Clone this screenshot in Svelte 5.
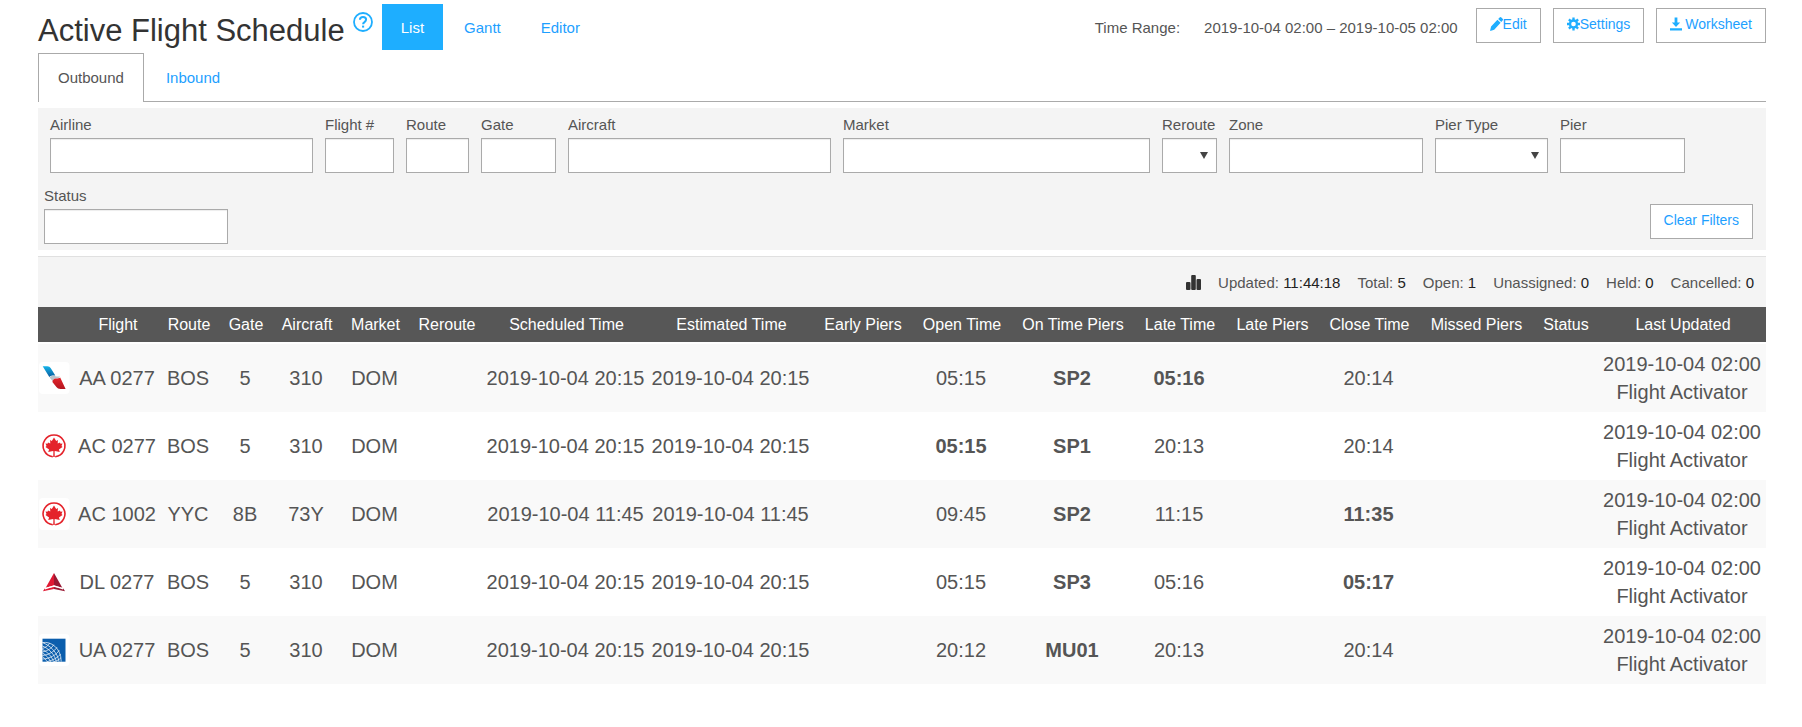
<script>
  const views = ['List', 'Gantt', 'Editor'];
  let view = $state('List');

  const directions = ['Outbound', 'Inbound'];
  let direction = $state('Outbound');

  const filters = [
    { id: 'airline', label: 'Airline' },
    { id: 'flight', label: 'Flight #' },
    { id: 'route', label: 'Route' },
    { id: 'gate', label: 'Gate' },
    { id: 'aircraft', label: 'Aircraft' },
    { id: 'market', label: 'Market' },
    { id: 'reroute', label: 'Reroute', select: true },
    { id: 'zone', label: 'Zone' },
    { id: 'pier-type', label: 'Pier Type', select: true },
    { id: 'pier', label: 'Pier' }
  ];

  const stats = [
    ['Updated:', '11:44:18'],
    ['Total:', '5'],
    ['Open:', '1'],
    ['Unassigned:', '0'],
    ['Held:', '0'],
    ['Cancelled:', '0']
  ];

  const columns = [
    { label: '', width: 38 },
    { label: 'Flight', width: 82 },
    { label: 'Route', width: 60 },
    { label: 'Gate', width: 54 },
    { label: 'Aircraft', width: 68 },
    { label: 'Market', width: 69 },
    { label: 'Reroute', width: 74 },
    { label: 'Scheduled Time', width: 165 },
    { label: 'Estimated Time', width: 165 },
    { label: 'Early Piers', width: 98 },
    { label: 'Open Time', width: 100 },
    { label: 'On Time Piers', width: 122 },
    { label: 'Late Time', width: 92 },
    { label: 'Late Piers', width: 93 },
    { label: 'Close Time', width: 101 },
    { label: 'Missed Piers', width: 113 },
    { label: 'Status', width: 66 },
    { label: 'Last Updated', width: 168 }
  ];
  const totalWidth = columns.reduce((sum, c) => sum + c.width, 0);

  const flights = [
    { airline: 'AA', flight: 'AA 0277', route: 'BOS', gate: '5', aircraft: '310', time: '2019-10-04 20:15', open: '05:15', pier: 'SP2', late: '05:16', close: '20:14', bold: 'late' },
    { airline: 'AC', flight: 'AC 0277', route: 'BOS', gate: '5', aircraft: '310', time: '2019-10-04 20:15', open: '05:15', pier: 'SP1', late: '20:13', close: '20:14', bold: 'open' },
    { airline: 'AC', flight: 'AC 1002', route: 'YYC', gate: '8B', aircraft: '73Y', time: '2019-10-04 11:45', open: '09:45', pier: 'SP2', late: '11:15', close: '11:35', bold: 'close' },
    { airline: 'DL', flight: 'DL 0277', route: 'BOS', gate: '5', aircraft: '310', time: '2019-10-04 20:15', open: '05:15', pier: 'SP3', late: '05:16', close: '05:17', bold: 'close' },
    { airline: 'UA', flight: 'UA 0277', route: 'BOS', gate: '5', aircraft: '310', time: '2019-10-04 20:15', open: '20:12', pier: 'MU01', late: '20:13', close: '20:14', bold: '' }
  ];
</script>

<div class="page">
  <header class="top">
    <h1>Active Flight Schedule</h1>
    <a class="help" href="#help" aria-label="Help">
      <svg width="20" height="20" viewBox="0 0 20 20" fill="none" stroke="#1eaeff">
        <circle cx="10" cy="10" r="9" stroke-width="1.8" />
        <path d="M6.9 7.7C7 5.9 8.3 4.9 10 4.9s3.1 1 3.1 2.7c0 1.3-.8 1.9-1.6 2.5-.9.6-1.4 1-1.4 2.1" stroke-width="2" />
        <path d="M10.1 13.6v2" stroke-width="2.1" />
      </svg>
    </a>
    <nav class="views">
      {#each views as v}
        <a href={'#' + v.toLowerCase()} class:active={view === v} onclick={() => (view = v)}>{v}</a>
      {/each}
    </nav>
    <div class="range"><span>Time Range:</span><span>2019-10-04 02:00 – 2019-10-05 02:00</span></div>
    <div class="actions">
      <button type="button">
        <svg width="13" height="14" viewBox="0 0 13 14" fill="#1eaeff">
          <path d="M0 14l1.100-4.600L7.400 2.700l3.200 3.100L4.200 12.700zM8.200 1.900L9.600.5a1.300 1.300 0 0 1 1.800 0l1.200 1.200a1.300 1.300 0 0 1 0 1.800L11.300 5z" />
        </svg>Edit
      </button>
      <button type="button">
        <svg width="13" height="14" viewBox="0 0 14 14">
          <g stroke="#1eaeff" stroke-width="2.5">
            <path d="M7 0v14M0 7h14M2.05 2.05l9.9 9.9M11.95 2.05l-9.9 9.9" />
          </g>
          <circle cx="7" cy="7" r="5" fill="#1eaeff" />
          <circle cx="7" cy="7" r="2.5" fill="#fff" />
        </svg>Settings
      </button>
      <button type="button">
        <svg class="spaced" width="12" height="14" viewBox="0 0 13 14" fill="#1eaeff">
          <path d="M5 0h3v5.500h3L6.500 10.300 2 5.500h3zM0 11.500h13V14H0z" />
        </svg>Worksheet
      </button>
    </div>
  </header>

  <nav class="tabs">
    {#each directions as d}
      <a href={'#' + d.toLowerCase()} class:active={direction === d} onclick={() => (direction = d)}>{d}</a>
    {/each}
  </nav>

  <form class="filters" onsubmit={(e) => e.preventDefault()}>
    <div class="grid">
      {#each filters as f}
        <div class="field">
          <label for={f.id}>{f.label}</label>
          {#if f.select}
            <div class="select">
              <select id={f.id}><option value=""></option></select>
              <svg width="8" height="7" viewBox="0 0 8 7" fill="#444"><path d="M0 0h8L4 7z" /></svg>
            </div>
          {:else}
            <input id={f.id} type="text" />
          {/if}
        </div>
      {/each}
    </div>
    <div class="second">
      <div class="field status">
        <label for="status">Status</label>
        <input id="status" type="text" />
      </div>
      <button type="reset">Clear Filters</button>
    </div>
  </form>

  <div class="stats">
    <svg width="15" height="15" viewBox="0 0 15 15" fill="#333">
      <rect x="0" y="7" width="4.500" height="8" rx="1" />
      <rect x="5.200" y="0" width="4.600" height="15" rx="1" />
      <rect x="10.500" y="4" width="4.500" height="11" rx="1" />
    </svg>
    {#each stats as [label, value]}
      <span>{label} <b>{value}</b></span>
    {/each}
  </div>

  <table>
    <colgroup>
      {#each columns as c}
        <col style={`width: ${(c.width / totalWidth) * 100}%`} />
      {/each}
    </colgroup>
    <thead>
      <tr>
        {#each columns as c}
          <th scope="col">{c.label}</th>
        {/each}
      </tr>
    </thead>
    <tbody>
      {#each flights as f}
        <tr>
          <td class="logo">
            <svg width="32" height="32" viewBox="0 0 32 32" role="img" aria-label={f.airline}>
              <rect x="1" width="30.500" height="32" rx="4" fill="#fff" />
              {#if f.airline === 'AA'}
                <defs>
                  <linearGradient id="aa-blue" x1="0" y1="0" x2="0" y2="1">
                    <stop offset="0" stop-color="#14b4ea" />
                    <stop offset="1" stop-color="#0a5c9e" />
                  </linearGradient>
                  <linearGradient id="aa-red" x1="0" y1="0" x2="0" y2="1">
                    <stop offset="0" stop-color="#e5252c" />
                    <stop offset="1" stop-color="#b3161f" />
                  </linearGradient>
                </defs>
                <path d="M4.700 4.200h4.600c1.700 0 2.700.7 3.500 2l4.500 7.300c-2.500-.3-4.500 0-6 1.500z" fill="url(#aa-blue)" />
                <path d="M11.600 15.600c1-1.700 3.200-2.100 5-1.700 1.500.3 3.500.8 5.500.6-1 1.500-2.500 1.900-4.600 2-1.500.1-2.500 1.200-2.800 2.700z" fill="#b9c3cb" />
                <path d="M14.400 20c.2-2 1.600-3.300 3.300-3.400 2 0 3.600-.2 4.500-1L27.600 27h-5c-2 0-3.200-.6-4.200-1.900z" fill="url(#aa-red)" />
              {:else if f.airline === 'AC'}
                <path d="M14.800 26.700a10.900 10.900 0 1 1 2.400 0" fill="none" stroke="#e4232b" stroke-width="1.600" />
                <path d="M16 7.500l2.200 3.400 1.700-.8-.2 3.400 2.300-1 .5 1.300 2-.2-1 2.400 1 .9-3.600 2.600.9 2.500-4.900-.9-.3.300.2 5.600h-1.600l.2-5.600-.3-.3-4.900.9.900-2.500-3.600-2.600 1-.9-1-2.400 2 .2.500-1.300 2.300 1-.2-3.400 1.700.8z" fill="#e4232b" />
              {:else if f.airline === 'DL'}
                <path d="M16 7v12.600L7.700 21.700z" fill="#e01933" />
                <path d="M16 7v12.600l8.300 2.100z" fill="#991933" />
                <path d="M5 25.300l1.700-2.700L16 20.900l-.1 2.100z" fill="#e01933" />
                <path d="M27 25.300l-1.700-2.700L16 20.900v2.100z" fill="#991933" />
                <path d="M6.800 22.900L16 19.900l9.200 3" fill="none" stroke="#fff" stroke-width="1.400" />
              {:else}
                <rect x="4.500" y="4.700" width="23" height="23" fill="#0b5ead" />
                <g fill="none" stroke="#fff" stroke-width=".8" opacity=".9">
                  <path d="M4.500 8.600c8-1.500 18.700 5 18.700 19" />
                  <path d="M4.500 8.600c7 2.500 15 9.500 16.500 19" />
                  <path d="M4.500 12c6 2.500 12.500 8.500 13.800 15.700" />
                  <path d="M4.500 15.500c5 2.500 9.500 7 11 12.200" />
                  <path d="M4.500 19c3.500 2 6.500 5 8 8.700" />
                  <path d="M4.500 22.700c2 1.200 3.500 3 4.500 5" />
                  <path d="M4.500 14.500c3-1 6-3 7.200-5.500M4.500 18c5-1 9.500-4 11.300-7.300" />
                  <path d="M4.500 21.500c6-.5 12-4 14.500-8.300M4.500 25c7 0 14-4.200 16.700-8.700M9 27.700c6-1.500 11-4 13.700-7.700M16 27.700c3-1 5.500-2.200 7-4" />
                </g>
              {/if}
            </svg>
          </td>
          <td>{f.flight}</td>
          <td>{f.route}</td>
          <td>{f.gate}</td>
          <td>{f.aircraft}</td>
          <td>DOM</td>
          <td></td>
          <td>{f.time}</td>
          <td>{f.time}</td>
          <td></td>
          <td class:bold={f.bold === 'open'}>{f.open}</td>
          <td class="bold">{f.pier}</td>
          <td class:bold={f.bold === 'late'}>{f.late}</td>
          <td></td>
          <td class:bold={f.bold === 'close'}>{f.close}</td>
          <td></td>
          <td></td>
          <td>2019-10-04 02:00<br />Flight Activator</td>
        </tr>
      {/each}
    </tbody>
  </table>
</div>

<style>
  :global(body) {
    background: #fff;
  }
  .page {
    padding: 4px 36px 40px 38px;
    font-family: 'Liberation Sans', Arial, sans-serif;
    font-size: 15px;
    color: #555;
  }
  .page :global(*) {
    box-sizing: border-box;
  }
  a {
    color: #1e9fff;
    text-decoration: none;
  }
  .top {
    display: flex;
    align-items: flex-start;
  }
  h1 {
    margin: 0;
    padding-top: 5px;
    font-size: 31px;
    font-weight: 400;
    line-height: 44px;
    color: #333;
    white-space: nowrap;
  }
  .help {
    padding: 8px 9px 0 8px;
    line-height: 0;
  }
  .views {
    display: flex;
    gap: 2px;
  }
  .views a {
    padding: 0 19px;
    line-height: 47px;
  }
  .views a.active {
    background: #1eaeff;
    color: #fff;
    height: 46px;
  }
  .range {
    display: flex;
    gap: 24px;
    margin-left: auto;
    line-height: 47px;
    white-space: nowrap;
  }
  .actions {
    display: flex;
    gap: 12px;
    padding: 4px 0 0 18px;
  }
  button {
    display: flex;
    align-items: center;
    height: 35px;
    padding: 0 13px 3px;
    border: 1px solid #aaa;
    background: #fff;
    font: inherit;
    font-size: 14px;
    color: #1e9fff;
    white-space: nowrap;
  }
  .spaced {
    margin-right: 3px;
  }
  .tabs {
    display: flex;
    gap: 2px;
    border-bottom: 1px solid #aaa;
  }
  .tabs a {
    padding: 0 19px;
    border: 1px solid transparent;
    border-bottom: 0;
    line-height: 47px;
  }
  .tabs a.active {
    margin-bottom: -1px;
    padding-bottom: 1px;
    border-color: #aaa;
    background: #fff;
    color: #555;
  }
  .filters {
    margin-top: 6px;
    padding: 7px 13px 6px 6px;
    background: #f4f4f4;
  }
  .grid {
    display: grid;
    grid-template-columns: 263fr 69fr 63fr 75fr 263fr 307fr 55fr 194fr 113fr 125fr 56fr;
    gap: 12px;
    padding-left: 6px;
  }
  .field {
    min-width: 0;
  }
  label {
    display: block;
    margin-bottom: 3px;
    line-height: 20px;
    white-space: nowrap;
  }
  input,
  select {
    display: block;
    width: 100%;
    height: 35px;
    margin: 0;
    padding: 0 8px;
    border: 1px solid #aaa;
    border-radius: 0;
    background: #fff;
    font: inherit;
    color: #555;
    appearance: none;
    box-shadow: inset 0 1px 1px rgba(0, 0, 0, 0.075);
  }
  .select {
    position: relative;
  }
  .select svg {
    position: absolute;
    top: 14px;
    right: 9px;
    pointer-events: none;
  }
  .second {
    display: flex;
    align-items: flex-end;
    justify-content: space-between;
    margin-top: 13px;
  }
  .second button {
    margin-bottom: 5px;
  }
  .status {
    width: 184px;
  }
  .stats {
    display: flex;
    align-items: center;
    justify-content: flex-end;
    gap: 17px;
    min-height: 51px;
    margin-top: 6px;
    padding: 1px 12px 0;
    border-top: 1px solid #e0e0e0;
    background: #f4f4f4;
  }
  .stats b {
    font-weight: 400;
    color: #222;
  }
  table {
    width: 100%;
    table-layout: fixed;
    border-collapse: separate;
    border-spacing: 0;
    text-align: center;
    white-space: nowrap;
  }
  th {
    height: 37px;
    padding: 0 0 0 2px;
    border-bottom: 2px solid #fff;
    background: #575757;
    font-size: 16px;
    font-weight: 400;
    color: #fff;
  }
  td {
    height: 68px;
    padding: 0;
    font-size: 20px;
    line-height: 28px;
  }
  tbody tr:nth-child(odd) {
    background: #f9f9f9;
  }
  .logo {
    text-align: left;
    line-height: 0;
  }
  .bold {
    font-weight: 700;
  }
</style>
